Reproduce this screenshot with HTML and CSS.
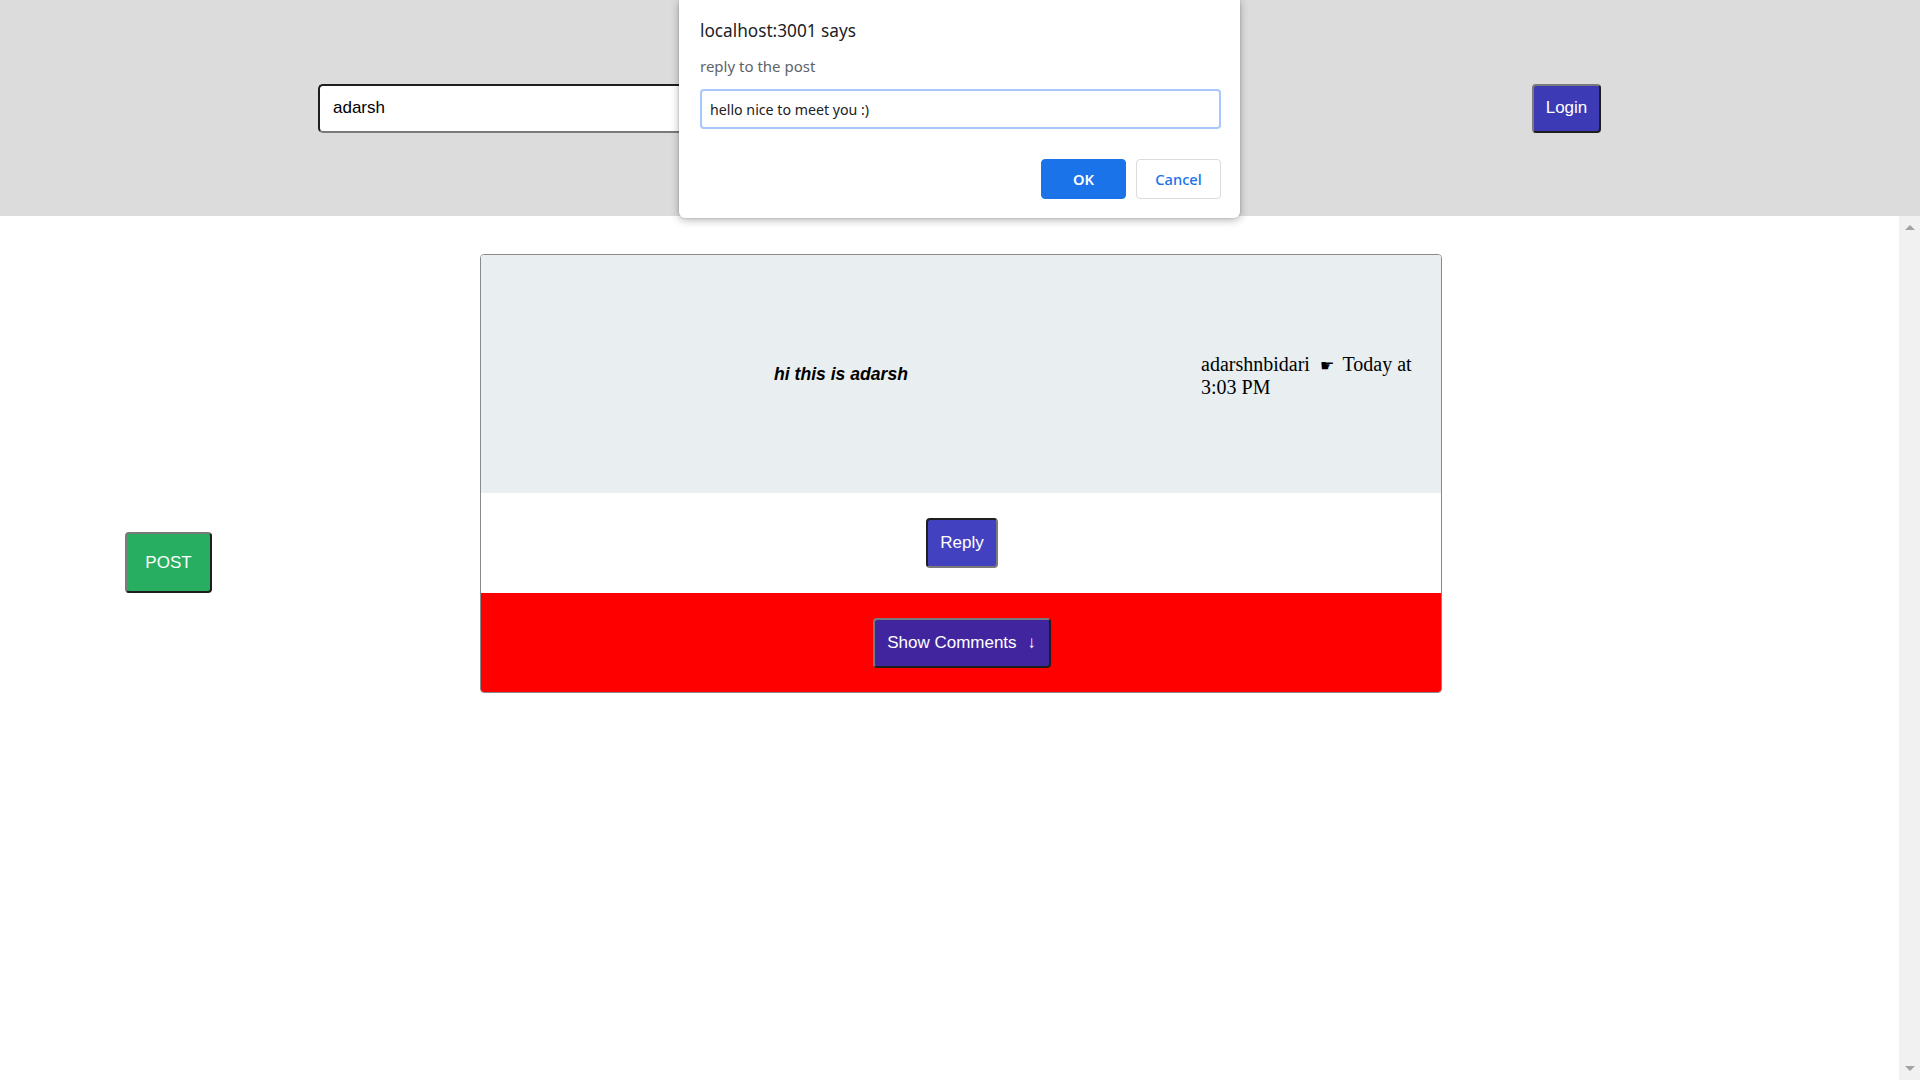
FILE: index.html
```html
<!DOCTYPE html>
<html lang="en">
<head>
<meta charset="utf-8">
<title>Posts</title>
<link rel="stylesheet" href="styles.css">
</head>
<body>
<div class="page">
  <header class="topbar">
    <input class="name-input" type="text" value="adarsh">
    <button class="btn btn-login">Login</button>
  </header>
  <div class="body-row">
    <main class="content">
      <aside class="side">
        <button class="btn btn-post">POST</button>
      </aside>
      <article class="card">
        <section class="card-top">
          <div class="post-text">hi this is adarsh</div>
          <div class="post-meta">adarshnbidari <span class="hand">&#9755;</span> Today at 3:03 PM</div>
        </section>
        <section class="card-reply">
          <button class="btn btn-reply">Reply</button>
        </section>
        <section class="card-comments">
          <button class="btn btn-comments">Show Comments <span class="arrow">&#8595;</span></button>
        </section>
      </article>
    </main>
    <div class="scrollbar">
      <span class="sb-up"></span>
      <span class="sb-down"></span>
    </div>
  </div>
  <div class="dialog">
    <div class="dlg-title">localhost:3001 says</div>
    <div class="dlg-msg">reply to the post</div>
    <div class="dlg-input">hello nice to meet you :)</div>
    <div class="dlg-actions">
      <button class="dlg-btn dlg-ok">OK</button>
      <button class="dlg-btn dlg-cancel">Cancel</button>
    </div>
  </div>
</div>
</body>
</html>
```

FILE: styles.css
```css
html, body {
  margin: 0;
  padding: 0;
  width: 1920px;
  height: 1080px;
  overflow: hidden;
  background: #ffffff;
  font-family: "Liberation Sans", Arial, sans-serif;
}

.page {
  position: relative;
  width: 1920px;
  height: 1080px;
  display: flex;
  flex-direction: column;
}

.topbar {
  height: 216px;
  flex: 0 0 216px;
  background: #dcdcdc;
  display: flex;
  align-items: center;
  justify-content: space-between;
  padding: 0 319px 0 318px;
  box-sizing: border-box;
}

.name-input {
  width: 460px;
  height: 49px;
  box-sizing: border-box;
  border-style: solid;
  border-width: 2px;
  border-color: #1e1e1e #7a7a7a #7a7a7a #1e1e1e;
  border-radius: 5px;
  padding: 0 13px;
  font-family: "Liberation Sans", Arial, sans-serif;
  font-size: 17px;
  color: #000;
  background: #fff;
  outline: none;
}

.btn {
  font-family: "Liberation Sans", Arial, sans-serif;
  font-size: 17px;
  color: #ffffff;
  border-width: 2px;
  border-style: solid;
  border-color: #7a7a7a #1e1e1e #1e1e1e #7a7a7a;
  border-radius: 4px;
  box-sizing: border-box;
  padding: 0;
  cursor: pointer;
}

.btn-login {
  width: 69px;
  height: 49px;
  background: #3c3ab5;
}

.body-row {
  flex: 1 1 auto;
  display: flex;
  min-height: 0;
}

.content {
  flex: 1 1 auto;
  display: flex;
  align-items: flex-start;
  padding-top: 38px;
}

.side {
  width: 480px;
  flex: 0 0 480px;
  padding-top: 278px;
  padding-left: 125px;
  box-sizing: border-box;
}

.btn-post {
  width: 87px;
  height: 61px;
  background: #27ae60;
}

.card {
  width: 962px;
  flex: 0 0 962px;
  border: 1px solid #8a8a8a;
  border-radius: 4px;
  overflow: hidden;
  box-sizing: border-box;
}

.card-top {
  height: 238px;
  background: #e9eef0;
  display: flex;
  align-items: center;
}

.post-text {
  flex: 3 1 0;
  text-align: center;
  font-weight: bold;
  font-style: italic;
  font-size: 17.6px;
  color: #000;
  padding-top: 1px;
}

.post-meta {
  flex: 1 1 0;
  font-family: "Liberation Serif", "Times New Roman", "DejaVu Serif", serif;
  font-size: 20px;
  line-height: 23px;
  color: #000;
  padding-top: 4px;
}

.post-meta .hand {
  margin: 0 4px 0 5px;
  font-size: 16px;
  line-height: 20px;
}

.card-reply {
  height: 100px;
  background: #ffffff;
  display: flex;
  align-items: center;
  justify-content: center;
}

.btn-reply {
  width: 72px;
  height: 50px;
  background: #4242c0;
  border-color: #1e1e1e #7a7a7a #7a7a7a #1e1e1e;
  margin-left: 2px;
}

.card-comments {
  height: 99px;
  background: #ff0000;
  display: flex;
  align-items: center;
  justify-content: center;
}

.btn-comments {
  width: 178px;
  height: 50px;
  background: #41259f;
  margin-left: 1px;
}

.btn-comments .arrow {
  margin-left: 6px;
}

.scrollbar {
  width: 21px;
  flex: 0 0 21px;
  background: #f1f1f1;
  display: flex;
  flex-direction: column;
  justify-content: space-between;
  align-items: center;
  padding: 9px 0 9px 0;
  box-sizing: border-box;
}

.sb-up {
  width: 0;
  height: 0;
  border-left: 5px solid transparent;
  border-right: 5px solid transparent;
  border-bottom: 5px solid #a3a3a3;
}

.sb-down {
  width: 0;
  height: 0;
  border-left: 5px solid transparent;
  border-right: 5px solid transparent;
  border-top: 5px solid #a3a3a3;
}

.dialog {
  position: absolute;
  left: 679px;
  top: 0;
  width: 561px;
  height: 218px;
  box-sizing: border-box;
  background: #ffffff;
  border-radius: 0 0 6px 6px;
  box-shadow: 0 2px 8px rgba(0, 0, 0, 0.3), 0 0 2px rgba(0, 0, 0, 0.2);
  padding: 17px 19px 0 21px;
  font-family: "Noto Sans", "Open Sans", sans-serif;
}

.dlg-title {
  font-size: 17.2px;
  line-height: 28px;
  color: #202124;
}

.dlg-msg {
  margin-top: 11px;
  font-size: 15px;
  line-height: 20px;
  color: #5f6368;
}

.dlg-input {
  margin-top: 13px;
  height: 40px;
  box-sizing: border-box;
  border: 2px solid #a8c7fa;
  border-radius: 4px;
  padding: 0 8px;
  display: flex;
  align-items: center;
  font-family: "Noto Sans", "Open Sans", sans-serif;
  font-size: 14.2px;
  color: #202124;
}

.dlg-actions {
  margin-top: 30px;
  display: flex;
  justify-content: flex-end;
  gap: 10px;
}

.dlg-btn {
  width: 85px;
  height: 40px;
  box-sizing: border-box;
  border-radius: 4px;
  font-family: "Noto Sans", "Open Sans", sans-serif;
  font-size: 14.7px;
  font-weight: 600;
  padding: 0;
}

.dlg-ok {
  background: #1a73e8;
  border: 1px solid #1a73e8;
  color: #ffffff;
}

.dlg-cancel {
  background: #ffffff;
  border: 1px solid #dadce0;
  color: #1a73e8;
  font-weight: 500;
}
```
